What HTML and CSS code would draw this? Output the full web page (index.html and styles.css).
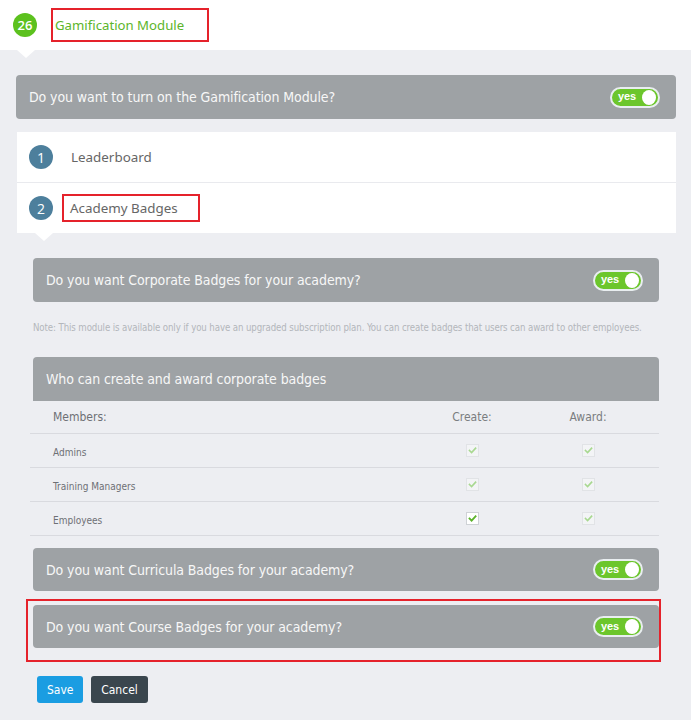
FILE: index.html
```html
<!DOCTYPE html>
<html>
<head>
<meta charset="utf-8">
<link rel="stylesheet" href="styles.css">
</head>
<body>
<header class="top">
  <span class="num">26</span>
  <span class="title">Gamification Module</span>
  <span class="notch top-notch"></span>
</header>
<main class="content">
  <div class="bar bar-main">
    <span>Do you want to turn on the Gamification Module?</span>
    <span class="toggle"><span class="yes">yes</span><span class="knob"></span></span>
  </div>
  <div class="steps">
    <div class="step">
      <span class="step-num">1</span>
      <span class="step-label">Leaderboard</span>
    </div>
    <div class="step step-active">
      <span class="step-num">2</span>
      <span class="step-label boxed">Academy Badges</span>
    </div>
    <span class="notch step-notch"></span>
  </div>
  <section class="inner">
    <div class="bar">
      <span>Do you want Corporate Badges for your academy?</span>
      <span class="toggle"><span class="yes">yes</span><span class="knob"></span></span>
    </div>
    <p class="note">Note: This module is available only if you have an upgraded subscription plan. You can create badges that users can award to other employees.</p>
    <div class="bar bar-head">
      <span>Who can create and award corporate badges</span>
    </div>
    <div class="table">
      <div class="row row-head">
        <span class="c-name">Members:</span>
        <span class="c-col">Create:</span>
        <span class="c-col">Award:</span>
      </div>
      <div class="row">
        <span class="c-name">Admins</span>
        <span class="c-col"><span class="cb dis"><svg viewBox="0 0 11 11"><path d="M2.5 5.5 L4.6 7.6 L8.6 3.2"/></svg></span></span>
        <span class="c-col"><span class="cb dis"><svg viewBox="0 0 11 11"><path d="M2.5 5.5 L4.6 7.6 L8.6 3.2"/></svg></span></span>
      </div>
      <div class="row">
        <span class="c-name">Training Managers</span>
        <span class="c-col"><span class="cb dis"><svg viewBox="0 0 11 11"><path d="M2.5 5.5 L4.6 7.6 L8.6 3.2"/></svg></span></span>
        <span class="c-col"><span class="cb dis"><svg viewBox="0 0 11 11"><path d="M2.5 5.5 L4.6 7.6 L8.6 3.2"/></svg></span></span>
      </div>
      <div class="row">
        <span class="c-name">Employees</span>
        <span class="c-col"><span class="cb on"><svg viewBox="0 0 11 11"><path d="M2.5 5.5 L4.6 7.6 L8.6 3.2"/></svg></span></span>
        <span class="c-col"><span class="cb dis"><svg viewBox="0 0 11 11"><path d="M2.5 5.5 L4.6 7.6 L8.6 3.2"/></svg></span></span>
      </div>
    </div>
    <div class="bar bar-curr">
      <span>Do you want Curricula Badges for your academy?</span>
      <span class="toggle"><span class="yes">yes</span><span class="knob"></span></span>
    </div>
    <div class="redbox">
      <div class="bar">
        <span>Do you want Course Badges for your academy?</span>
        <span class="toggle"><span class="yes">yes</span><span class="knob"></span></span>
      </div>
    </div>
    <div class="actions">
      <button class="btn save">Save</button>
      <button class="btn cancel">Cancel</button>
    </div>
  </section>
</main>
</body>
</html>
```
FILE: styles.css
```css
* { box-sizing: border-box; }
html, body { margin: 0; padding: 0; }
body {
  background: #edeef2;
  font-family: "Open Sans", "DejaVu Sans", sans-serif;
  width: 691px;
  height: 720px;
  overflow: hidden;
}
.top {
  position: relative;
  height: 50px;
  background: #fff;
  display: flex;
  align-items: center;
  padding-left: 13px;
}
.num {
  width: 24px; height: 24px; border-radius: 50%;
  background: #5cc11e; color: #fff;
  font-size: 13px; display: flex; align-items: center; justify-content: center;
  font-weight: 600;
}
.title {
  margin-left: 14px;
  border: 2px solid #e5222b;
  height: 34px;
  width: 158px;
  display: flex; align-items: center;
  padding-left: 2px;
  color: #5cb52a;
  font-size: 13.2px;
  font-family: "Noto Sans", sans-serif;
}
.notch {
  position: absolute;
  width: 0; height: 0;
  border-left: 9px solid transparent;
  border-right: 9px solid transparent;
  border-top: 8px solid #fff;
}
.top-notch { left: 17px; bottom: -8px; }
.content { padding: 25px 15px 0 16px; }
.bar {
  height: 44px;
  background: #9ea2a5;
  border-radius: 4px;
  display: flex; align-items: center; justify-content: space-between;
  padding: 0 16px 0 13px;
  color: #f7f7f7;
  font-family: "DejaVu Sans Condensed", "DejaVu Sans", sans-serif;
  font-size: 14px;
  letter-spacing: -0.1px;
}
.toggle {
  width: 50px; height: 21px;
  border-radius: 11px;
  background: #6cc62c;
  border: 2px solid #e9eef0;
  display: flex; align-items: center; justify-content: space-between;
  padding: 0 2px 0 6px;
  font-family: "Liberation Sans", sans-serif;
  font-weight: bold;
  font-size: 11px;
}
.yes { color: #fff; margin-top: -2px; }
.knob { width: 14px; height: 15px; border-radius: 50%; background: #fff; }
.steps {
  position: relative;
  margin: 13px 0 0 1px;
  background: #fff;
}
.step {
  height: 50px;
  display: flex; align-items: center;
  padding-left: 12px;
}
.step + .step { border-top: 1px solid #e9eaee; height: 51px; }
.step-num {
  width: 24px; height: 24px; border-radius: 50%;
  background: #4d7f9c; color: #fff;
  display: flex; align-items: center; justify-content: center;
  font-size: 14px;
}
.step-label {
  margin-left: 18px; color: #666;
  font-size: 13.4px; font-family: "Noto Sans", sans-serif;
  letter-spacing: 0;
}
.step-label.boxed {
  margin-left: 9px;
  border: 2px solid #e5222b;
  height: 28px; width: 138px;
  padding-left: 6px;
  display: flex; align-items: center;
}
.step-notch { left: 18px; bottom: -8px; }
.inner { padding: 25px 17px 0 17px; }
.note {
  margin: 20px 0 0 0;
  font-family: "DejaVu Sans Condensed", "DejaVu Sans", sans-serif;
  font-size: 9.6px;
  color: #b3b6bb;
  height: 35px;
  letter-spacing: -0.1px;
  white-space: nowrap;
}
.bar-head { border-radius: 4px 4px 0 0; }
.table { margin-left: -3px; }
.row {
  display: grid;
  grid-template-columns: 1fr 116px 116px 13px;
  align-items: center;
  height: 34px;
  border-bottom: 1px solid #d9dadf;
  padding-left: 23px;
}
.row-head { height: 33px; }
.row-head span {
  font-family: "DejaVu Sans Condensed", "DejaVu Sans", sans-serif;
  font-size: 12px; color: #7a7d80;
}
.row span.c-name {
  font-family: "DejaVu Sans Condensed", "DejaVu Sans", sans-serif;
  font-size: 10px; color: #6d7075;
  padding-top: 3px;
}
.row-head span.c-name { font-size: 12px; padding-top: 0; }
.c-col { text-align: center; line-height: 0; }
.cb {
  display: inline-flex; width: 13px; height: 13px;
  align-items: center; justify-content: center;
  border: 1px solid #e1e3e6;
}
.cb svg { width: 11px; height: 11px; }
.cb path { fill: none; stroke-width: 1.6; stroke-linecap: square; }
.cb.dis { background: #f3f4f6; }
.cb.dis path { stroke: #a8d890; }
.cb.on { background: #fff; border-color: #cfd2d6; }
.cb.on path { stroke: #5bb32a; stroke-width: 1.8; }
.bar-curr { margin-top: 12px; height: 43px; }
.redbox {
  margin: 8px -2px 0 -7px;
  border: 2px solid #e5222b;
  padding: 4px 0 12px 5px;
}
.redbox .bar { height: 43px; }
.actions { display: flex; gap: 8px; margin: 14px 0 0 4px; }
.btn {
  border: none; border-radius: 3px; color: #fff;
  height: 27px; padding: 0 10px;
  font-family: "DejaVu Sans Condensed", "DejaVu Sans", sans-serif;
  font-size: 12px;
}
.save { background: #1a9de2; width: 46px; }
.cancel { background: #3a464e; width: 57px; }
```
